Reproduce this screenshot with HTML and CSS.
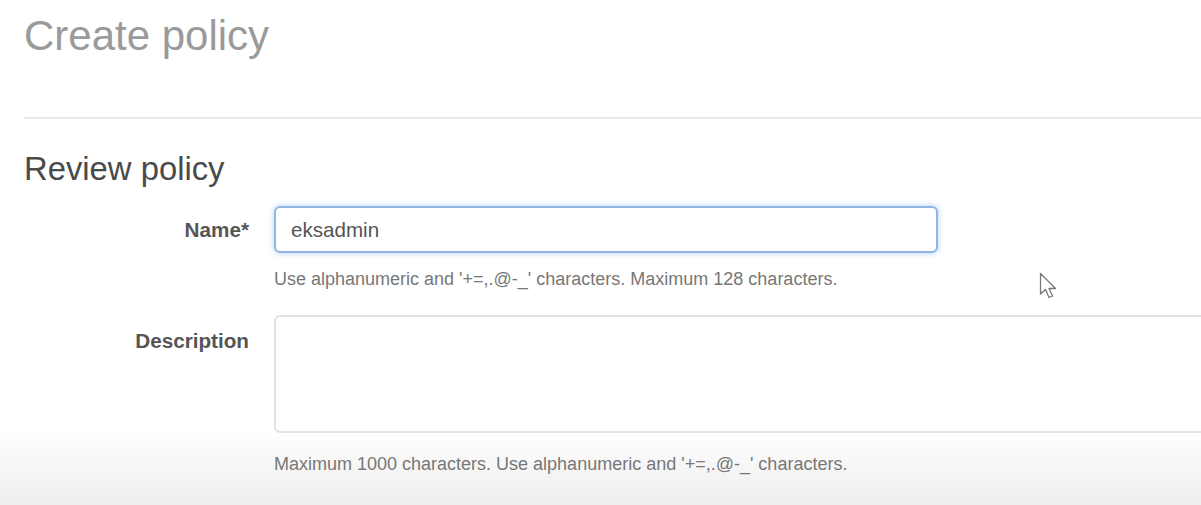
FILE: index.html
```html
<!DOCTYPE html>
<html>
  <head>
    <title>Create policy</title>
    <meta name="viewport" content="width=device-width, initial-scale=1.0">
    <link rel="stylesheet" href="styles.css">
  </head>
  <body>
    <div class="page">
      <h1 class="page-title">Create policy</h1>
      <hr class="divider">
      <h2 class="section-title">Review policy</h2>

      <div class="form-row">
        <label class="form-label" for="policy-name">Name*</label>
        <div class="form-field">
          <input id="policy-name" class="text-input name-input" value="eksadmin">
          <div class="hint">Use alphanumeric and '+=,.@-_' characters. Maximum 128 characters.</div>
        </div>
      </div>

      <div class="form-row">
        <label class="form-label" for="policy-desc">Description</label>
        <div class="form-field">
          <textarea id="policy-desc" class="text-input desc-input"></textarea>
          <div class="hint">Maximum 1000 characters. Use alphanumeric and '+=,.@-_' characters.</div>
        </div>
      </div>
    </div>

    <svg class="mouse-cursor" width="20" height="30" viewBox="0 0 20 30">
      <path d="M1.5 1.5 L1.5 22 L6.5 17.5 L10 25.5 L13.5 24 L10 16.5 L16.5 16.5 Z" fill="#fff" stroke="#777" stroke-width="1.3" stroke-linejoin="round"/>
    </svg>
  </body>
</html>
```

FILE: styles.css
```css
html, body{
  margin: 0;
  height: 100%;
}

body{
  font-family: Arial, "Liberation Sans", sans-serif;
  color: #444;
  background: linear-gradient(to bottom, #ffffff 0, #ffffff 432px, #f3f3f3 480px, #eeeeee 505px);
  overflow: hidden;
  position: relative;
}

.page{
  padding: 0 0 0 24px;
}

.page-title{
  margin: 0;
  padding-top: 13px;
  font-size: 42px;
  font-weight: normal;
  color: #9a9a9a;
  line-height: 46px;
}

.divider{
  margin: 58px 0 0 0;
  border: none;
  border-top: 2px solid #e8e8e8;
}

.section-title{
  margin: 30px 0 0 0;
  font-size: 32.8px;
  font-weight: normal;
  color: #4a4a4a;
  line-height: 40px;
}

.form-row{
  display: flex;
  align-items: flex-start;
  margin-top: 17px;
}

.form-row + .form-row{
  margin-top: 26px;
}

.form-label{
  flex-shrink: 0;
  width: 250px;
  text-align: right;
  padding-right: 25px;
  font-size: 20.7px;
  font-weight: bold;
  color: #555;
  line-height: 47px;
  box-sizing: border-box;
}

.form-row + .form-row .form-label{
  line-height: 52px;
}

.form-field{
  flex: 1;
  min-width: 0;
  display: flex;
  flex-direction: column;
}

.text-input{
  font-family: Arial, "Liberation Sans", sans-serif;
  font-size: 20.6px;
  color: #555;
  background: #fff;
  border-radius: 6px;
  box-sizing: border-box;
  outline: none;
}

.name-input{
  width: 664px;
  height: 47px;
  padding: 0 15px;
  border: 2px solid #8fb5e6;
  box-shadow: 0 0 6px rgba(90, 150, 230, 0.45);
}

.desc-input{
  width: 960px;
  height: 118px;
  border: 2px solid #e3e3e3;
  resize: none;
}

.hint{
  margin-top: 16px;
  font-size: 18px;
  color: #777;
  line-height: 20px;
  white-space: nowrap;
}

.form-row + .form-row .hint{
  margin-top: 21px;
}

.mouse-cursor{
  position: absolute;
  left: 1039px;
  top: 272px;
}
```
